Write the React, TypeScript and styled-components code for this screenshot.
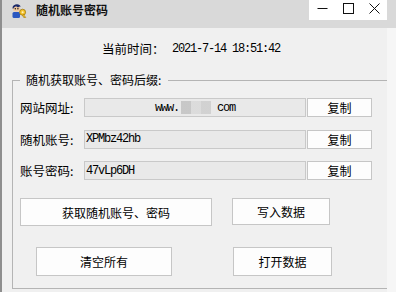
import React from "react";
import styled, { createGlobalStyle } from "styled-components";

const Global = createGlobalStyle`
  html, body { margin: 0; padding: 0; }
  body {
    width: 396px;
    height: 292px;
    overflow: hidden;
    background: #f0f0f0;
    font-family: "Noto Sans CJK SC", "Noto Sans", sans-serif;
    color: #000;
  }
`;

const Window = styled.div`
  display: flex;
  flex-direction: column;
  width: 396px;
  height: 292px;
  box-sizing: border-box;
  border-left: 2px solid #8e8e8e;
  background: #f0f0f0;
  overflow: hidden;
`;

const TitleBar = styled.div`
  display: flex;
  align-items: flex-start;
  height: 28px;
  flex-shrink: 0;
  background: #d9d9d9;
`;

const AppIcon = styled.div`
  margin: 2px 0 0 9px;
  width: 16px;
  height: 16px;
  display: flex;
`;

const Title = styled.div`
  margin-left: 9px;
  font-size: 12px;
  font-weight: 700;
  line-height: 20px;
  color: #111;
`;

const Controls = styled.div`
  margin-left: auto;
  margin-right: 9px;
  width: 78px;
  height: 20px;
  background: #ffffff;
  display: flex;
`;

const CtrlButton = styled.div`
  flex: 1;
  display: flex;
  justify-content: center;
  align-items: flex-start;
  padding-top: 3px;
`;

const Body = styled.div`
  flex: 1;
  display: flex;
  min-height: 0;
`;

const Main = styled.div`
  flex: 1;
  display: flex;
  flex-direction: column;
  padding-left: 10px;
  min-width: 0;
`;

const EdgeStrip = styled.div`
  width: 9px;
  background: #f6f6f6;
`;

const TimeRow = styled.div`
  height: 44px;
  box-sizing: border-box;
  padding: 13px 0 0 90px;
  display: flex;
  align-items: flex-start;
  line-height: 16px;
  flex-shrink: 0;
`;

const TimeLabel = styled.span`
  width: 70px;
  font-size: 12.5px;
`;

const Mono = styled.span`
  font-family: "Liberation Mono", "DejaVu Sans Mono", monospace;
  font-size: 12px;
  letter-spacing: -1.2px;
`;

const Group = styled.fieldset`
  flex: 1;
  margin: 0 0 3px 0;
  padding: 10px 0 0 7px;
  border: 1px solid #b4b4b4;
  border-right: none;
  min-width: 0;
  display: flex;
  flex-direction: column;
`;

const Legend = styled.legend`
  padding: 0 7px 0 6px;
  font-size: 12px;
  line-height: 16px;
`;

const Rows = styled.div`
  display: flex;
  flex-direction: column;
  gap: 12.5px;
`;

const Row = styled.div`
  display: flex;
  align-items: center;
  height: 19px;
`;

const RowLabel = styled.span`
  width: 64px;
  font-size: 12.5px;
  line-height: 19px;
`;

const Field = styled.div<{ $center?: boolean }>`
  width: 222px;
  height: 19px;
  box-sizing: border-box;
  background: #e9e9e9;
  border: 1px solid #c9c9c9;
  display: flex;
  align-items: center;
  justify-content: ${(p) => (p.$center ? "center" : "flex-start")};
  padding-left: ${(p) => (p.$center ? "0" : "1px")};
  white-space: nowrap;
  overflow: hidden;
`;

const Blur = styled.span`
  display: inline-block;
  width: 30px;
  height: 13px;
  margin: 0 6px 0 2px;
  background:
    linear-gradient(90deg, #c4c4c4 0 10px, #dadada 10px 20px, #cfcfcf 20px 30px);
  opacity: 0.9;
`;

const Button = styled.button<{ $w: number; $h: number; $ml?: number }>`
  width: ${(p) => p.$w}px;
  height: ${(p) => p.$h}px;
  margin: 0 0 0 ${(p) => p.$ml ?? 0}px;
  padding: 0;
  box-sizing: border-box;
  background: #fdfdfd;
  border: 1px solid #c6c6c6;
  border-radius: 0;
  font-family: "Noto Sans CJK SC", "Noto Sans", sans-serif;
  font-size: 12px;
  color: #000;
  display: flex;
  align-items: center;
  justify-content: center;
  flex-shrink: 0;
`;

const BigRow = styled.div<{ $mt: number; $pl: number }>`
  display: flex;
  align-items: flex-start;
  margin-top: ${(p) => p.$mt}px;
  padding-left: ${(p) => p.$pl}px;
`;

const Icon = () => (
  <svg width="16" height="16" viewBox="0 0 16 16">
    <rect x="1.5" y="10" width="7.5" height="6" rx="1.5" fill="#2b58c0" />
    <ellipse cx="5.5" cy="6.5" rx="3.6" ry="3.3" fill="#f1c9a0" />
    <path d="M1.5 6 C1.5 1.5 9.5 1 9.5 5 L8.5 4.5 L7 5.5 L5 4.2 L3 5.5 L2 7 Z" fill="#1c2a6a" />
    <circle cx="4.3" cy="6.8" r="0.7" fill="#111" />
    <circle cx="6.9" cy="6.8" r="0.7" fill="#111" />
    <circle cx="11.6" cy="10.2" r="3" fill="#f3c22c" stroke="#9a7000" strokeWidth="0.7" />
    <circle cx="11.6" cy="10.2" r="1" fill="#fff3c0" />
    <path d="M12.6 12.6 L14.8 15.5 L13.6 16 L13.2 15 L12.5 15.3 L11.5 13.2 Z" fill="#f3c22c" stroke="#9a7000" strokeWidth="0.5" />
  </svg>
);

const urlRow = (
  <Field $center>
    <Mono>www.</Mono>
    <Blur />
    <Mono>com</Mono>
  </Field>
);

export default function App() {
  return (
    <>
      <Global />
      <Window>
        <TitleBar>
          <AppIcon>
            <Icon />
          </AppIcon>
          <Title>随机账号密码</Title>
          <Controls>
            <CtrlButton>
              <svg width="11" height="11" viewBox="0 0 11 11">
                <line x1="0.5" y1="5.5" x2="10.5" y2="5.5" stroke="#111" strokeWidth="1" />
              </svg>
            </CtrlButton>
            <CtrlButton>
              <svg width="11" height="11" viewBox="0 0 11 11">
                <rect x="0.5" y="0.5" width="10" height="10" fill="none" stroke="#111" strokeWidth="1" />
              </svg>
            </CtrlButton>
            <CtrlButton>
              <svg width="11" height="11" viewBox="0 0 11 11">
                <path d="M0.5 0.5 L10.5 10.5 M10.5 0.5 L0.5 10.5" stroke="#111" strokeWidth="1" />
              </svg>
            </CtrlButton>
          </Controls>
        </TitleBar>
        <Body>
          <Main>
            <TimeRow>
              <TimeLabel>当前时间：</TimeLabel>
              <Mono>2021-7-14 18:51:42</Mono>
            </TimeRow>
            <Group>
              <Legend>随机获取账号、密码后缀:</Legend>
              <Rows>
                <Row>
                  <RowLabel>网站网址:</RowLabel>
                  {urlRow}
                  <Button $w={65} $h={19} $ml={1}>复制</Button>
                </Row>
                <Row>
                  <RowLabel>随机账号:</RowLabel>
                  <Field>
                    <Mono>XPMbz42hb</Mono>
                  </Field>
                  <Button $w={65} $h={19} $ml={1}>复制</Button>
                </Row>
                <Row>
                  <RowLabel>账号密码:</RowLabel>
                  <Field>
                    <Mono>47vLp6DH</Mono>
                  </Field>
                  <Button $w={65} $h={19} $ml={1}>复制</Button>
                </Row>
              </Rows>
              <BigRow $mt={18} $pl={0}>
                <Button $w={192} $h={28}>获取随机账号、密码</Button>
                <Button $w={98} $h={27} $ml={20}>写入数据</Button>
              </BigRow>
              <BigRow $mt={21} $pl={16}>
                <Button $w={136} $h={29}>清空所有</Button>
                <Button $w={99} $h={29} $ml={61}>打开数据</Button>
              </BigRow>
            </Group>
          </Main>
          <EdgeStrip />
        </Body>
      </Window>
    </>
  );
}
